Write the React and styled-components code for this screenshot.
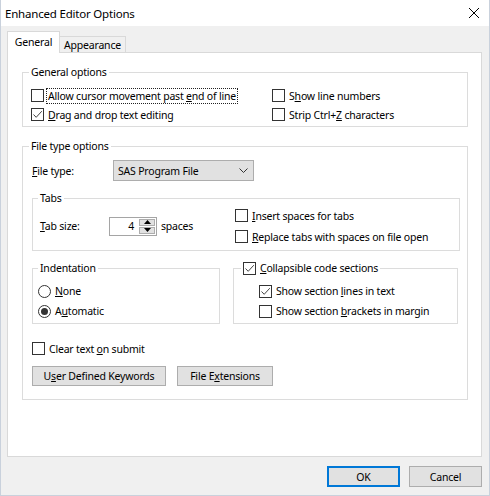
import styled, { createGlobalStyle } from "styled-components";

const GlobalStyle = createGlobalStyle`
  html, body {
    margin: 0;
    padding: 0;
    background: #f0f0f0;
  }
  body {
    font-family: "Noto Sans", "Open Sans", sans-serif;
    font-size: 10.5px;
    letter-spacing: -0.2px;
    color: #000;
  }
  * {
    box-sizing: border-box;
  }
`;

const Window = styled.div`
  width: 490px;
  height: 496px;
  border: 1px solid #c9d1dc;
  border-top: none;
  background: #f0f0f0;
  display: flex;
  flex-direction: column;
`;

const TitleBar = styled.div`
  height: 26px;
  background: #fff;
  display: flex;
  align-items: center;
  justify-content: space-between;
  padding: 0 10px 0 4px;
  font-size: 11.5px;
`;

const Body = styled.div`
  padding: 6px 7px 0 6px;
`;

const TabList = styled.div`
  display: flex;
  align-items: flex-end;
  height: 21px;
  position: relative;
  z-index: 1;
  margin-bottom: -1px;
`;

const Tab = styled.div`
  height: ${(p) => (p.$active ? 22 : 17)}px;
  width: ${(p) => p.$w}px;
  margin-left: ${(p) => (p.$active ? 0 : -1)}px;
  background: ${(p) => (p.$active ? "#fff" : "#f0f0f0")};
  border: 1px solid #d9d9d9;
  border-bottom: ${(p) => (p.$active ? "none" : "1px solid #d9d9d9")};
  display: flex;
  align-items: center;
  justify-content: center;
  padding-bottom: ${(p) => (p.$active ? 2 : 0)}px;
`;

const Panel = styled.div`
  height: 405px;
  background: #fff;
  border: 1px solid #d9d9d9;
  padding: 12px 13px 0 14px;
`;

const Group = styled.fieldset`
  margin: ${(p) => p.$m || "0"};
  padding: 0;
  border: 1px solid #dcdcdc;
  min-width: 0;
  width: ${(p) => (p.$w ? `${p.$w}px` : "auto")};
`;

const Legend = styled.legend`
  margin-left: ${(p) => p.$ml ?? 6}px;
  padding: 0 2px;
  line-height: 14px;
  height: 14px;
  display: flex;
  align-items: center;
  gap: 4px;
`;

const GroupBody = styled.div`
  padding: ${(p) => p.$pad};
`;

const TwoCol = styled.div`
  display: grid;
  grid-template-columns: ${(p) => p.$cols};
`;

const Option = styled.label`
  display: flex;
  align-items: center;
  height: ${(p) => p.$h || 19}px;
  gap: 2px;
  white-space: nowrap;
`;

const Box = styled.span`
  width: 13px;
  height: 13px;
  border: 1px solid #333;
  background: #fff;
  display: inline-flex;
  align-items: center;
  justify-content: center;
  flex: none;
`;

const Radio = styled(Box)`
  border-radius: 50%;
  &::after {
    content: "";
    width: 7px;
    height: 7px;
    border-radius: 50%;
    background: ${(p) => (p.$on ? "#333" : "transparent")};
  }
`;

const Text = styled.span`
  padding: 0 1px;
  line-height: 14px;
  border: 1px dotted ${(p) => (p.$focus ? "#222" : "transparent")};
`;

const FieldRow = styled.div`
  display: flex;
  align-items: center;
  height: ${(p) => p.$h || 21}px;
`;

const FieldLabel = styled.span`
  width: ${(p) => p.$w}px;
  flex: none;
`;

const Select = styled.div`
  width: 141px;
  height: 21px;
  background: #e1e1e1;
  border: 1px solid #adadad;
  display: flex;
  align-items: center;
  justify-content: space-between;
  padding: 0 5px 0 4px;
`;

const Spin = styled.div`
  width: 48px;
  height: 19px;
  border: 1px solid #a5a5a5;
  display: flex;
  align-items: stretch;
  padding: 1px;
  margin-right: 4px;
`;

const SpinValue = styled.span`
  flex: 1;
  text-align: right;
  padding-right: 5px;
  line-height: 15px;
`;

const SpinButtons = styled.div`
  width: 16px;
  display: flex;
  flex-direction: column;
  gap: 1px;
`;

const SpinButton = styled.div`
  flex: 1;
  background: #e1e1e1;
  border: 1px solid #adadad;
  display: flex;
  align-items: center;
  justify-content: center;
`;

const Row = styled.div`
  display: flex;
  gap: ${(p) => p.$gap || 0}px;
  margin-top: ${(p) => p.$mt || 0}px;
`;

const Button = styled.button`
  font: inherit;
  letter-spacing: inherit;
  height: ${(p) => p.$h || 20}px;
  width: ${(p) => p.$w}px;
  background: #e1e1e1;
  border: ${(p) => (p.$default ? "2px solid #0078d7" : "1px solid #adadad")};
  padding: 0;
  color: #000;
`;

const Footer = styled.div`
  display: flex;
  justify-content: flex-end;
  gap: 9px;
  padding: 9px 0 0;
`;

const Check = ({ on }) => (
  <Box>
    {on && (
      <svg width="11" height="11" viewBox="0 0 11 11">
        <path d="M1.5 5.5 L4.2 8.3 L9.8 2.2" fill="none" stroke="#444" strokeWidth="1" />
      </svg>
    )}
  </Box>
);

const CheckOption = ({ on, focus, h, children }) => (
  <Option $h={h}>
    <Check on={on} />
    <Text $focus={focus}>{children}</Text>
  </Option>
);

const RadioOption = ({ on, children }) => (
  <Option $h={20}>
    <Radio $on={on} />
    <Text>{children}</Text>
  </Option>
);

const Arrow = ({ up }) => (
  <svg width="7" height="4" viewBox="0 0 7 4">
    <path d={up ? "M0 4 L3.5 0 L7 4 Z" : "M0 0 L3.5 4 L7 0 Z"} fill="#000" />
  </svg>
);

export default function App() {
  return (
    <>
      <GlobalStyle />
      <Window>
        <TitleBar>
          <span>Enhanced Editor Options</span>
          <svg width="10" height="10" viewBox="0 0 10 10">
            <path d="M0 0 L10 10 M10 0 L0 10" stroke="#000" strokeWidth="1" />
          </svg>
        </TitleBar>
        <Body>
          <TabList>
            <Tab $active $w={53}>General</Tab>
            <Tab $w={67}>Appearance</Tab>
          </TabList>
          <Panel>
            <Group>
              <Legend>General options</Legend>
              <GroupBody $pad="7px 8px 2px">
                <TwoCol $cols="241px auto">
                  <CheckOption focus>
                    Allow cursor movement past <u>e</u>nd of line
                  </CheckOption>
                  <CheckOption>
                    S<u>h</u>ow line numbers
                  </CheckOption>
                  <CheckOption on>
                    <u>D</u>rag and drop text editing
                  </CheckOption>
                  <CheckOption>
                    Strip Ctrl+<u>Z</u> characters
                  </CheckOption>
                </TwoCol>
              </GroupBody>
            </Group>

            <Group $m="12px 0 0">
              <Legend>File type options</Legend>
              <GroupBody $pad="7px 7px 13px 9px">
                <FieldRow>
                  <FieldLabel $w={81}>
                    <u>F</u>ile type:
                  </FieldLabel>
                  <Select>
                    <span>SAS Program File</span>
                    <svg width="9" height="5" viewBox="0 0 9 5">
                      <path d="M0.5 0.5 L4.5 4.5 L8.5 0.5" fill="none" stroke="#333" strokeWidth="1" />
                    </svg>
                  </Select>
                </FieldRow>

                <Group $m="10px 0 0">
                  <Legend $ml={5}>Tabs</Legend>
                  <GroupBody $pad="0 8px 3px 7px">
                    <TwoCol $cols="195px auto">
                      <FieldRow $h={42}>
                        <FieldLabel $w={69}>
                          <u>T</u>ab size:
                        </FieldLabel>
                        <Spin>
                          <SpinValue>4</SpinValue>
                          <SpinButtons>
                            <SpinButton>
                              <Arrow up />
                            </SpinButton>
                            <SpinButton>
                              <Arrow />
                            </SpinButton>
                          </SpinButtons>
                        </Spin>
                        <span>spaces</span>
                      </FieldRow>
                      <div>
                        <CheckOption h={21}>
                          <u>I</u>nsert spaces for tabs
                        </CheckOption>
                        <CheckOption h={21}>
                          <u>R</u>eplace tabs with spaces on file open
                        </CheckOption>
                      </div>
                    </TwoCol>
                  </GroupBody>
                </Group>

                <Row $gap={13} $mt={10}>
                  <Group $w={188}>
                    <Legend $ml={5}>Indentation</Legend>
                    <GroupBody $pad="6px 5px 2px">
                      <RadioOption>
                        <u>N</u>one
                      </RadioOption>
                      <RadioOption on>
                        A<u>u</u>tomatic
                      </RadioOption>
                    </GroupBody>
                  </Group>
                  <Group $w={225}>
                    <Legend $ml={7}>
                      <Check on />
                      <span>
                        <u>C</u>ollapsible code sections
                      </span>
                    </Legend>
                    <GroupBody $pad="6px 5px 2px 25px">
                      <CheckOption on h={20}>
                        Show section <u>l</u>ines in text
                      </CheckOption>
                      <CheckOption h={20}>
                        Show section <u>b</u>rackets in margin
                      </CheckOption>
                    </GroupBody>
                  </Group>
                </Row>

                <Row $mt={15}>
                  <CheckOption>
                    Clear text <u>o</u>n submit
                  </CheckOption>
                </Row>

                <Row $gap={11} $mt={8}>
                  <Button $w={134}>
                    U<u>s</u>er Defined Keywords
                  </Button>
                  <Button $w={96}>
                    File E<u>x</u>tensions
                  </Button>
                </Row>
              </GroupBody>
            </Group>
          </Panel>
          <Footer>
            <Button $default $w={73} $h={21}>
              OK
            </Button>
            <Button $w={73} $h={21}>
              Cancel
            </Button>
          </Footer>
        </Body>
      </Window>
    </>
  );
}
